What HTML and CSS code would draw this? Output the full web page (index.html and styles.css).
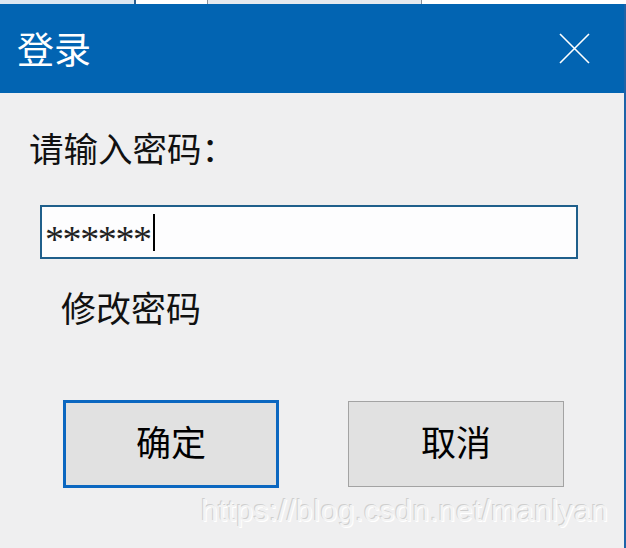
FILE: index.html
```html
<!DOCTYPE html>
<html lang="zh-CN">
<head>
<meta charset="utf-8">
<title>登录</title>
<link rel="stylesheet" href="styles.css">
</head>
<body>
<div class="tabs">
  <div class="seg seg-a"></div>
  <div class="seg seg-line-dark"></div>
  <div class="seg seg-b"></div>
  <div class="seg seg-line"></div>
  <div class="seg seg-c"></div>
  <div class="seg seg-line"></div>
  <div class="seg seg-d"></div>
</div>
<div class="window">
  <div class="titlebar">
    <span class="title">登录</span>
    <svg class="close" width="31" height="31" viewBox="0 0 31 31" aria-hidden="true">
      <path d="M1 1 L30 30 M30 1 L1 30" stroke="#ffffff" stroke-width="1.6" fill="none"/>
    </svg>
  </div>
  <div class="content">
    <div class="label">请输入密码：</div>
    <div class="input"><span class="stars">******</span><span class="caret"></span></div>
    <div class="link">修改密码</div>
    <div class="buttons">
      <div class="btn btn-ok">确定</div>
      <div class="btn btn-cancel">取消</div>
    </div>
  </div>
  <div class="watermark">https://blog.csdn.net/manlyan</div>
</div>
</body>
</html>
```

FILE: styles.css
```css
html, body {
  margin: 0;
  padding: 0;
}
body {
  width: 626px;
  height: 548px;
  overflow: hidden;
  background: #efeff0;
  font-family: "Noto Sans CJK SC", "Noto Sans", sans-serif;
  color: #000;
}
.tabs {
  display: flex;
  height: 4px;
}
.seg-a { width: 134px; background: #dde7f1; }
.seg-line-dark { width: 2px; background: #2c5f8f; }
.seg-b { width: 71px; background: #ffffff; }
.seg-line { width: 1px; background: #8a9099; }
.seg-c { width: 213px; background: #e4e9ef; }
.seg-d { flex: 1; background: #ffffff; }

.window {
  position: relative;
  width: 624px;
  height: 544px;
  border-right: 2px solid #1d63a8;
  background: #efeff0;
}
.titlebar {
  height: 89px;
  background: #0264b2;
  display: flex;
  align-items: center;
  justify-content: space-between;
  padding: 0 34px 0 17px;
}
.title {
  color: #ffffff;
  font-size: 37px;
  line-height: 37px;
}
.close {
  display: block;
}
.content {
  padding-top: 37px;
}
.label {
  margin-left: 29px;
  font-size: 34.5px;
  line-height: 34px;
  color: #111;
}
.input {
  box-sizing: border-box;
  margin: 41px 0 0 40px;
  width: 538px;
  height: 54px;
  border: 2px solid #1f5f8b;
  background: #fdfdfe;
  display: flex;
  align-items: center;
  padding-left: 3px;
}
.stars {
  font-family: "Liberation Serif", serif;
  font-size: 38px;
  line-height: 38px;
  letter-spacing: -1.4px;
  color: #222;
  position: relative;
  top: 7px;
}
.caret {
  width: 2px;
  height: 37px;
  background: #000;
  margin-left: 2px;
}
.link {
  margin: 30px 0 0 61px;
  font-size: 35px;
  line-height: 35px;
  color: #111;
}
.buttons {
  display: flex;
  align-items: center;
  gap: 69px;
  margin: 76px 0 0 63px;
}
.btn {
  box-sizing: border-box;
  width: 216px;
  height: 88px;
  background: #e1e1e1;
  display: flex;
  align-items: center;
  justify-content: center;
  font-size: 35px;
  line-height: 35px;
  padding-bottom: 8px;
}
.btn-ok {
  border: 3px solid #0b67c0;
}
.btn-cancel {
  height: 86px;
  border: 1px solid #a3a3a3;
}
.watermark {
  position: absolute;
  left: 201px;
  top: 490px;
  font-family: "Liberation Sans", sans-serif;
  font-size: 30px;
  letter-spacing: 0.6px;
  color: #f3f3f3;
  text-shadow: -1px -1px 0 #cfcfcf, 1px 1px 0 #ffffff;
}
```
